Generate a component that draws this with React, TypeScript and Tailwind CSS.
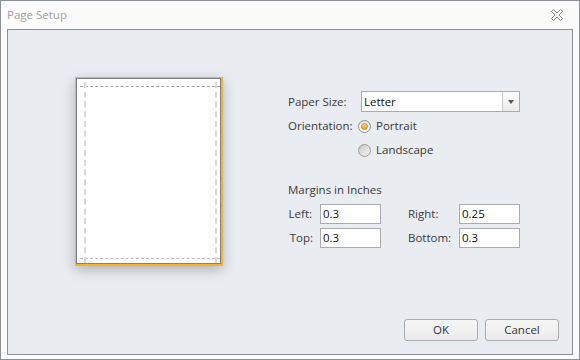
import React from "react";

const font = { fontFamily: '"Open Sans", "Noto Sans", sans-serif' };

const CloseIcon = () => (
  <svg width="12" height="12" viewBox="0 0 12 12" className="block">
    <path
      d="M0.5 2.5 L2.5 0.5 L6 4 L9.5 0.5 L11.5 2.5 L8 6 L11.5 9.5 L9.5 11.5 L6 8 L2.5 11.5 L0.5 9.5 L4 6 Z"
      fill="#ffffff"
      stroke="#6a6a6a"
      strokeWidth="0.8"
    />
  </svg>
);

const Radio = ({ checked }: { checked?: boolean }) => (
  <span
    className={
      checked
        ? "flex h-[13px] w-[13px] items-center justify-center rounded-full border border-[#8e8f8f] bg-gradient-to-b from-[#e4e4e4] to-[#ffffff]"
        : "flex h-[13px] w-[13px] items-center justify-center rounded-full border border-[#9a9a9a] bg-gradient-to-br from-[#c9c9c9] to-[#f6f6f6]"
    }
  >
    {checked && (
      <span className="h-[7px] w-[7px] rounded-full border border-[#d18a10] bg-gradient-to-b from-[#fbd879] to-[#eea21a]" />
    )}
  </span>
);

const Field = ({ value }: { value: string }) => (
  <div className="flex h-[20px] w-[61px] items-center border border-[#a9abb1] bg-white pl-[2px] text-[#111]">
    {value}
  </div>
);

const Button = ({ label }: { label: string }) => (
  <button className="flex h-[22px] w-[74px] items-center justify-center rounded-[3px] border border-[#acacac] bg-gradient-to-b from-[#f6f6f6] to-[#ebebeb] text-[#333]">
    {label}
  </button>
);

const PagePreview = () => (
  <div className="relative h-[189px] w-[148px] border border-r-2 border-b-2 border-[#f5b325] shadow-[0_4px_12px_rgba(0,0,0,0.24)]">
    <div className="h-full w-full border border-[#7c818a] bg-white" />
    {/* margin guides */}
    <div className="absolute left-[4px] top-[8px] w-[140px] border-t border-dashed border-[#a3a3a3]" />
    <div className="absolute left-[4px] top-[180px] w-[140px] border-t border-dashed border-[#bdbdbd]" />
    <div className="absolute left-[8px] top-[4px] h-[181px] border-l-2 border-dashed border-[#d8d8d8]" />
    <div className="absolute left-[139px] top-[4px] h-[181px] border-l-2 border-dashed border-[#d8d8d8]" />
  </div>
);

export default function App() {
  return (
    <div
      className="flex h-[360px] w-[580px] flex-col border border-[#8d9196] bg-[#fbfbfb] text-[11.5px] text-[#3a3a3a]"
      style={font}
    >
      <div className="flex h-[28px] items-center justify-between pl-[6px] pr-[16px]">
        <span className="text-[#a0a0a0]">Page Setup</span>
        <CloseIcon />
      </div>

      <div className="mx-[6px] mb-[4px] flex flex-1 flex-col border border-[#8b9096] bg-[#e9ecf0]">
        <div className="flex pl-[67px] pt-[47px]">
          <PagePreview />

          <div className="ml-[65px] mt-[14px] flex flex-col">
            <div className="flex h-[21px] items-center">
              <span className="w-[73px]">Paper Size:</span>
              <div className="flex h-[21px] w-[159px] border border-[#a9abb1] bg-white">
                <span className="flex flex-1 items-center pl-[2px] text-[#111]">Letter</span>
                <span className="flex w-[17px] items-center justify-center border-l border-[#c9cbd0] bg-gradient-to-b from-[#fbfbfb] to-[#ececec]">
                  <span className="h-0 w-0 border-x-[3.5px] border-t-[4px] border-x-transparent border-t-[#555]" />
                </span>
              </div>
            </div>

            <div className="mt-[3px] flex h-[22px] items-center">
              <span className="w-[70px]">Orientation:</span>
              <Radio checked />
              <span className="ml-[5px]">Portrait</span>
            </div>

            <div className="mt-[2px] flex h-[22px] items-center pl-[70px]">
              <Radio />
              <span className="ml-[5px]">Landscape</span>
            </div>

            <div className="mt-[21px] flex h-[16px] items-center">Margins in Inches</div>

            <div className="mt-[6px] flex items-center">
              <span className="w-[32px] pr-[8px] text-right">Left:</span>
              <Field value="0.3" />
              <span className="ml-[27px] w-[51px]">Right:</span>
              <Field value="0.25" />
            </div>

            <div className="mt-[4px] flex items-center">
              <span className="w-[32px] pr-[7px] text-right">Top:</span>
              <Field value="0.3" />
              <span className="ml-[27px] w-[51px]">Bottom:</span>
              <Field value="0.3" />
            </div>
          </div>
        </div>

        <div className="mt-auto flex justify-end gap-[7px] pb-[13px] pr-[13px]">
          <Button label="OK" />
          <Button label="Cancel" />
        </div>
      </div>
    </div>
  );
}
